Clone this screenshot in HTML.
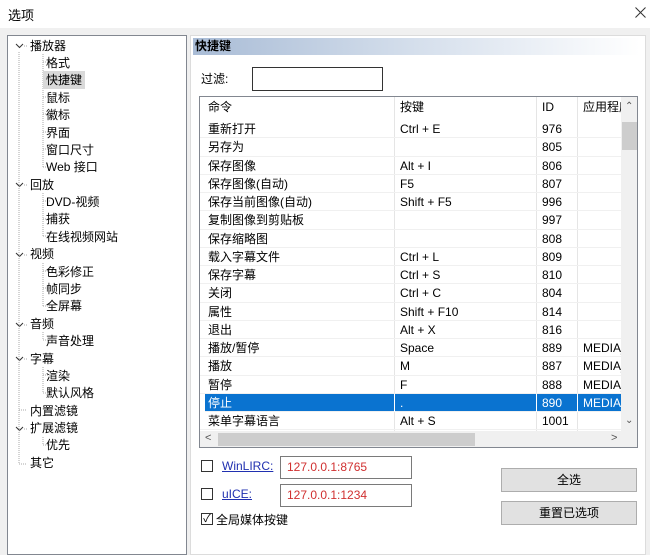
<!DOCTYPE html>
<html><head><meta charset="utf-8"><style>
*{margin:0;padding:0;box-sizing:border-box}
body{width:650px;height:548px;background:#f0f0f0;font-family:"Liberation Sans","Noto Sans CJK SC",sans-serif;font-size:12px;color:#000;position:relative;overflow:hidden}
.a{position:absolute;white-space:nowrap}
.tree{position:absolute;left:7px;top:35px;width:180px;height:520px;background:#fff;border:1px solid #828790}
.ti{position:absolute;line-height:16px;height:16px}
.vl{position:absolute;border-left:1px dotted #999}
.hl{position:absolute;border-top:1px dotted #999;width:8px}
.panel{position:absolute;left:190px;top:35px;width:456px;height:520px;background:#fff;border:1px solid #dcdcdc}
.row{position:absolute;left:0;width:422px;height:18.25px;line-height:18px;border-bottom:1px solid #f0f0f0}
.row span{position:absolute;top:0}
.c1{left:8px}.c2{left:200px}.c3{left:342px}.c4{left:383px}
.btn{position:absolute;background:#e1e1e1;border:1px solid #adadad;text-align:center;line-height:22px;width:136px;height:24px}
.cb{position:absolute;width:12px;height:12px;border:1px solid #333;background:#fff}
.inp{position:absolute;background:#fff;border:1px solid #7a7a7a;color:#d03030;padding-left:6px;line-height:20px}
</style></head><body>
<div class="a" style="left:0;top:0;width:650px;height:28px;background:#fff"></div>
<div class="a" style="left:8px;top:5px;font-size:13px">选项</div>
<svg class="a" style="left:635px;top:7px" width="11" height="11"><path d="M0.5 0.5L10.5 10.5M10.5 0.5L0.5 10.5" stroke="#333" stroke-width="1"/></svg>

<div class="tree">
<svg class="a" style="left:0;top:0" width="180" height="440">
<g stroke="#333" stroke-width="1" fill="none">
<path d="M8 8l3.5 3.5 3.5-3.5"/>
<path d="M8 147l3.5 3.5 3.5-3.5"/>
<path d="M8 217l3.5 3.5 3.5-3.5"/>
<path d="M8 287l3.5 3.5 3.5-3.5"/>
<path d="M8 321l3.5 3.5 3.5-3.5"/>
<path d="M8 391l3.5 3.5 3.5-3.5"/>
</g>
<g stroke="#aaa" stroke-dasharray="1 1" fill="none">
<path d="M11 16V428M11 428h8"/>
<path d="M35 18V131M35 26h8M35 43h8M35 61h8M35 78h8M35 96h8M35 113h8M35 131h8"/>
<path d="M35 157V200M35 165h8M35 183h8M35 200h8"/>
<path d="M35 227V270M35 235h8M35 252h8M35 270h8"/>
<path d="M35 296V304M35 304h8"/>
<path d="M35 331V357M35 339h8M35 357h8"/>
<path d="M11 374h8"/>
<path d="M35 401V409M35 409h8"/>
<path d="M16 10h4M16 149h4M16 219h4M16 289h4M16 323h4M16 393h4"/>
</g></svg>
<div class="ti" style="left:22px;top:2px">播放器</div>
<div class="ti" style="left:38px;top:19px">格式</div>
<div class="ti" style="left:35px;top:35px;background:#d9d9d9;padding:0 3px;height:18px;line-height:18px">快捷键</div>
<div class="ti" style="left:38px;top:54px">鼠标</div>
<div class="ti" style="left:38px;top:71px">徽标</div>
<div class="ti" style="left:38px;top:89px">界面</div>
<div class="ti" style="left:38px;top:106px">窗口尺寸</div>
<div class="ti" style="left:38px;top:123px">Web 接口</div>
<div class="ti" style="left:22px;top:141px">回放</div>
<div class="ti" style="left:38px;top:158px">DVD-视频</div>
<div class="ti" style="left:38px;top:175px">捕获</div>
<div class="ti" style="left:38px;top:193px">在线视频网站</div>
<div class="ti" style="left:22px;top:210px">视频</div>
<div class="ti" style="left:38px;top:228px">色彩修正</div>
<div class="ti" style="left:38px;top:245px">帧同步</div>
<div class="ti" style="left:38px;top:262px">全屏幕</div>
<div class="ti" style="left:22px;top:280px">音频</div>
<div class="ti" style="left:38px;top:297px">声音处理</div>
<div class="ti" style="left:22px;top:315px">字幕</div>
<div class="ti" style="left:38px;top:332px">渲染</div>
<div class="ti" style="left:38px;top:349px">默认风格</div>
<div class="ti" style="left:22px;top:367px">内置滤镜</div>
<div class="ti" style="left:22px;top:384px">扩展滤镜</div>
<div class="ti" style="left:38px;top:401px">优先</div>
<div class="ti" style="left:22px;top:419px">其它</div>
</div>

<div class="panel"></div>
<div class="a" style="left:193px;top:38px;width:447px;height:17px;background:linear-gradient(90deg,#a9bcd6,#d5dfec 50%,#fff);font-weight:bold;line-height:17px;padding-left:2px">快捷键</div>
<div class="a" style="left:201px;top:70px">过滤:</div>
<div class="a" style="left:252px;top:67px;width:131px;height:24px;background:#fff;border:1px solid #333"></div>

<div class="a" style="left:199px;top:96px;width:439px;height:352px;background:#fff;border:1px solid #828790;overflow:hidden">
<div class="row" style="top:0;height:20px;line-height:20px;border-bottom:none"><span class="c1">命令</span><span class="c2">按键</span><span class="c3">ID</span><span class="c4">应用程序</span></div>
<div class="a" style="left:194px;top:0;height:337px;border-left:1px solid #e5e5e5"></div>
<div class="a" style="left:336px;top:0;height:337px;border-left:1px solid #e5e5e5"></div>
<div class="a" style="left:377px;top:0;height:337px;border-left:1px solid #e5e5e5"></div>
<div class="row" style="top:23px"><span class="c1">重新打开</span><span class="c2">Ctrl + E</span><span class="c3">976</span></div>
<div class="row" style="top:41.25px"><span class="c1">另存为</span><span class="c3">805</span></div>
<div class="row" style="top:59.5px"><span class="c1">保存图像</span><span class="c2">Alt + I</span><span class="c3">806</span></div>
<div class="row" style="top:77.75px"><span class="c1">保存图像(自动)</span><span class="c2">F5</span><span class="c3">807</span></div>
<div class="row" style="top:96px"><span class="c1">保存当前图像(自动)</span><span class="c2">Shift + F5</span><span class="c3">996</span></div>
<div class="row" style="top:114.25px"><span class="c1">复制图像到剪贴板</span><span class="c3">997</span></div>
<div class="row" style="top:132.5px"><span class="c1">保存缩略图</span><span class="c3">808</span></div>
<div class="row" style="top:150.75px"><span class="c1">载入字幕文件</span><span class="c2">Ctrl + L</span><span class="c3">809</span></div>
<div class="row" style="top:169px"><span class="c1">保存字幕</span><span class="c2">Ctrl + S</span><span class="c3">810</span></div>
<div class="row" style="top:187.25px"><span class="c1">关闭</span><span class="c2">Ctrl + C</span><span class="c3">804</span></div>
<div class="row" style="top:205.5px"><span class="c1">属性</span><span class="c2">Shift + F10</span><span class="c3">814</span></div>
<div class="row" style="top:223.75px"><span class="c1">退出</span><span class="c2">Alt + X</span><span class="c3">816</span></div>
<div class="row" style="top:242px"><span class="c1">播放/暂停</span><span class="c2">Space</span><span class="c3">889</span><span class="c4">MEDIA_</span></div>
<div class="row" style="top:260.25px"><span class="c1">播放</span><span class="c2">M</span><span class="c3">887</span><span class="c4">MEDIA_</span></div>
<div class="row" style="top:278.5px"><span class="c1">暂停</span><span class="c2">F</span><span class="c3">888</span><span class="c4">MEDIA_</span></div>
<div class="row" style="top:296.75px;background:#0a73d0;color:#fff;left:5px;width:417px"><span style="left:3px">停止</span><span style="left:195px">.</span><span style="left:337px">890</span><span style="left:378px">MEDIA_</span></div>
<div class="a" style="left:194px;top:297px;height:18px;border-left:1px solid #fff"></div>
<div class="a" style="left:336px;top:297px;height:18px;border-left:1px solid #fff"></div>
<div class="a" style="left:377px;top:297px;height:18px;border-left:1px solid #fff"></div>
<div class="row" style="top:315px"><span class="c1">菜单字幕语言</span><span class="c2">Alt + S</span><span class="c3">1001</span></div>
<div class="a" style="left:421px;top:0;width:17px;height:334px;background:#f0f0f0"></div>
<div class="a" style="left:425px;top:4px;font-size:10px;color:#555">&#8963;</div>
<div class="a" style="left:422px;top:25px;width:15px;height:28px;background:#cdcdcd"></div>
<div class="a" style="left:425px;top:318px;font-size:10px;color:#555">&#8964;</div>
<div class="a" style="left:0;top:334px;width:438px;height:17px;background:#f0f0f0"></div>
<div class="a" style="left:5px;top:335px;font-size:11px;color:#555">&lt;</div>
<div class="a" style="left:18px;top:336px;width:257px;height:13px;background:#cdcdcd"></div>
<div class="a" style="left:411px;top:335px;font-size:11px;color:#555">&gt;</div>
</div>

<div class="cb" style="left:201px;top:460px"></div>
<div class="a" style="left:222px;top:459px;color:#2030b0;text-decoration:underline">WinLIRC:</div>
<div class="inp" style="left:280px;top:456px;width:132px;height:23px">127.0.0.1:8765</div>
<div class="cb" style="left:201px;top:488px"></div>
<div class="a" style="left:222px;top:487px;color:#2030b0;text-decoration:underline">uICE:</div>
<div class="inp" style="left:280px;top:484px;width:132px;height:23px">127.0.0.1:1234</div>
<div class="cb" style="left:201px;top:513px;font-size:11px;line-height:10px;text-align:center">✓</div>
<div class="a" style="left:216px;top:511px">全局媒体按键</div>
<div class="btn" style="left:501px;top:468px">全选</div>
<div class="btn" style="left:501px;top:501px">重置已选项</div>
</body></html>
